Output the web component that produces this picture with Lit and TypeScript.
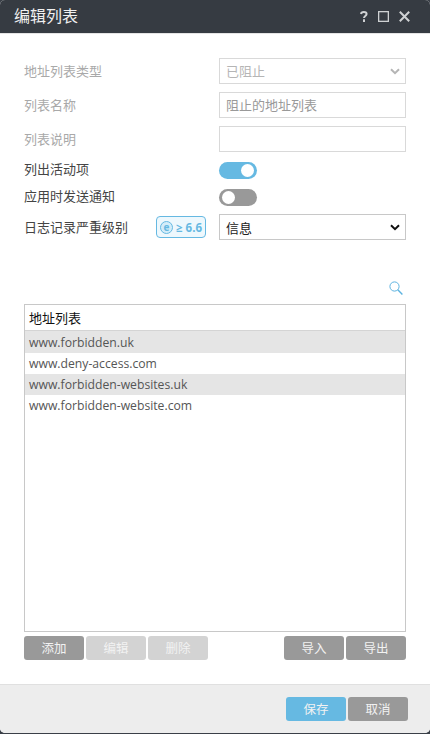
import { LitElement, html, css } from "lit";
import { customElement } from "lit/decorators.js";

@customElement("app-root")
export class AppRoot extends LitElement {
  static styles = css`
    :host {
      display: block;
      width: 430px;
      height: 734px;
      background: #3a3f47;
      font-family: "Open Sans", "Noto Sans CJK SC", sans-serif;
      font-size: 13px;
      color: #444;
      overflow: hidden;
    }
    * { box-sizing: border-box; }
    .dialog {
      height: 733px;
      display: flex;
      flex-direction: column;
      background: #fff;
      border-radius: 5px;
      overflow: hidden;
    }
    .head {
      height: 34px;
      flex: none;
      background: #363b42;
      border-bottom: 1px solid #e4e4e4;
      color: #f0f0f0;
      display: flex;
      align-items: center;
      justify-content: space-between;
      padding: 0 20px 2px 14px;
    }
    .title { font-size: 16px; line-height: 20px; }
    .tools { display: flex; align-items: center; gap: 10px; margin-top: 2px; }
    .tools svg { display: block; }
    .main {
      flex: 1;
      display: flex;
      flex-direction: column;
      padding: 24px 24px 0;
      min-height: 0;
    }
    .row {
      display: flex;
      align-items: center;
      justify-content: space-between;
    }
    .row.f { height: 26px; margin-bottom: 8px; }
    .row.f.log { margin: -2px 0 0; }
    .row.t { height: 17px; margin-bottom: 10px; }
    .row.t.first { margin-top: 2px; }
    .row.t .lab { margin-bottom: 3px; }
    .lab { color: #a9a9a9; line-height: 20px; }
    .lab.on { color: #444; }
    .left { display: flex; align-items: center; justify-content: space-between; width: 182px; }
    .ctl {
      width: 187px;
      height: 26px;
      border: 1px solid #d9d9d9;
      background: #fff;
      display: flex;
      align-items: center;
      justify-content: space-between;
      padding: 0 5px 2px 6px;
      color: #b5b5b5;
    }
    .ctl.name { color: #999; }
    .ctl.sel {
      border-color: #c8c8c8;
      color: #222;
      padding: 0 5px 0 6px;
    }
    .arrow { margin-top: 2px; }
    .sel .arrow { margin-top: 0; }
    .tog {
      width: 38px;
      height: 17px;
      border-radius: 9px;
      margin-right: 149px;
      display: flex;
      align-items: center;
      padding: 0 3px;
    }
    .tog.a { background: #66b9e2; justify-content: flex-end; }
    .tog.b { background: #999; }
    .knob { width: 13px; height: 13px; border-radius: 50%; background: #fff; }
    .badge {
      width: 50px;
      height: 22px;
      border: 1px solid #66b9e2;
      border-radius: 4px;
      background: #eef8fd;
      color: #66b9e2;
      font-weight: 700;
      font-size: 11.5px;
      display: flex;
      align-items: center;
      gap: 3px;
      padding-left: 3px;
      white-space: nowrap;
    }
    .e {
      width: 13px;
      height: 13px;
      border: 1.5px solid #66b9e2;
      border-radius: 50%;
      background: #d4edf9;
      display: flex;
      align-items: center;
      justify-content: center;
      font-size: 10px;
      line-height: 1;
      flex: none;
    }
    .search {
      display: flex;
      justify-content: flex-end;
      padding: 41px 3px 9px 0;
    }
    .search svg { display: block; }
    .table {
      flex: none;
      height: 328px;
      border: 1px solid #c8c8c8;
      background: #fff;
    }
    .th {
      height: 26px;
      border-bottom: 1px solid #d4d4d4;
      color: #111;
      display: flex;
      align-items: center;
      padding-left: 4px;
    }
    .tr {
      height: 21px;
      display: flex;
      align-items: center;
      padding-left: 4px;
      color: #555;
      font-size: 12.2px;
    }
    .tr:nth-child(2) { height: 22px; }
    .tr.alt { background: #e5e5e5; }
    .actions {
      display: flex;
      justify-content: space-between;
      margin-top: 4px;
    }
    .grp { display: flex; gap: 2px; }
    .btn {
      width: 60px;
      height: 24px;
      border-radius: 3px;
      background: #999;
      color: #f2f2f2;
      display: flex;
      align-items: center;
      justify-content: center;
      font-size: 12.5px;
      padding-bottom: 2px;
    }
    .btn.dis { background: #d3d3d3; }
    .btn.pri { background: #66b9e2; }
    .foot {
      height: 49px;
      flex: none;
      background: #ededed;
      border-top: 1px solid #e0e0e0;
      display: flex;
      justify-content: flex-end;
      gap: 2px;
      padding: 12px 22px 0 0;
    }
  `;

  render() {
    const rows = [
      "www.forbidden.uk",
      "www.deny-access.com",
      "www.forbidden-websites.uk",
      "www.forbidden-website.com",
    ];
    return html`
      <div class="dialog">
        <div class="head">
          <div class="title">编辑列表</div>
          <div class="tools">
            <svg width="8" height="11" viewBox="0 0 8 11" fill="none" stroke="#cfd1d3" stroke-width="2">
              <path d="M1 3C1.2 1.6 2.3 1 3.8 1c1.6 0 2.8.8 2.8 2.1 0 1.1-.7 1.6-1.5 2.1-.7.5-1.1.9-1.1 1.8" />
              <path d="M4 8.2V11" />
            </svg>
            <svg width="11" height="11" viewBox="0 0 11 11" fill="none" stroke="#cfd1d3" stroke-width="1.3">
              <rect x=".65" y=".65" width="9.7" height="9.7" />
            </svg>
            <svg width="11" height="11" viewBox="0 0 11 11" fill="none" stroke="#cfd1d3" stroke-width="2">
              <path d="M.8.8l9.4 9.4M10.2.8L.8 10.2" />
            </svg>
          </div>
        </div>
        <div class="main">
          <div class="row f">
            <span class="lab">地址列表类型</span>
            <div class="ctl">
              <span>已阻止</span>
              <svg class="arrow" width="10" height="7" viewBox="0 0 10 7" fill="none" stroke="#b5b5b5" stroke-width="2">
                <path d="M1 1.2l4 4 4-4" />
              </svg>
            </div>
          </div>
          <div class="row f">
            <span class="lab">列表名称</span>
            <div class="ctl name">阻止的地址列表</div>
          </div>
          <div class="row f">
            <span class="lab">列表说明</span>
            <div class="ctl"></div>
          </div>
          <div class="row t first">
            <span class="lab on">列出活动项</span>
            <div class="tog a"><div class="knob"></div></div>
          </div>
          <div class="row t">
            <span class="lab on">应用时发送通知</span>
            <div class="tog b"><div class="knob"></div></div>
          </div>
          <div class="row f log">
            <div class="left">
              <span class="lab on">日志记录严重级别</span>
              <div class="badge"><span class="e">e</span>≥ 6.6</div>
            </div>
            <div class="ctl sel">
              <span>信息</span>
              <svg class="arrow" width="10" height="7" viewBox="0 0 10 7" fill="none" stroke="#111" stroke-width="2">
                <path d="M1 1.2l4 4 4-4" />
              </svg>
            </div>
          </div>
          <div class="search">
            <svg width="14" height="14" viewBox="0 0 14 14" fill="none" stroke="#5cb3e0" stroke-width="1">
              <circle cx="5.5" cy="5.5" r="4.6" />
              <path d="M8.8 8.8l4.6 4.6" stroke-width="1.4" />
            </svg>
          </div>
          <div class="table">
            <div class="th">地址列表</div>
            ${rows.map(
              (r, i) => html`<div class="tr ${i % 2 === 0 ? "alt" : ""}">${r}</div>`
            )}
          </div>
          <div class="actions">
            <div class="grp">
              <div class="btn">添加</div>
              <div class="btn dis">编辑</div>
              <div class="btn dis">删除</div>
            </div>
            <div class="grp">
              <div class="btn">导入</div>
              <div class="btn">导出</div>
            </div>
          </div>
        </div>
        <div class="foot">
          <div class="btn pri">保存</div>
          <div class="btn">取消</div>
        </div>
      </div>
    `;
  }
}
